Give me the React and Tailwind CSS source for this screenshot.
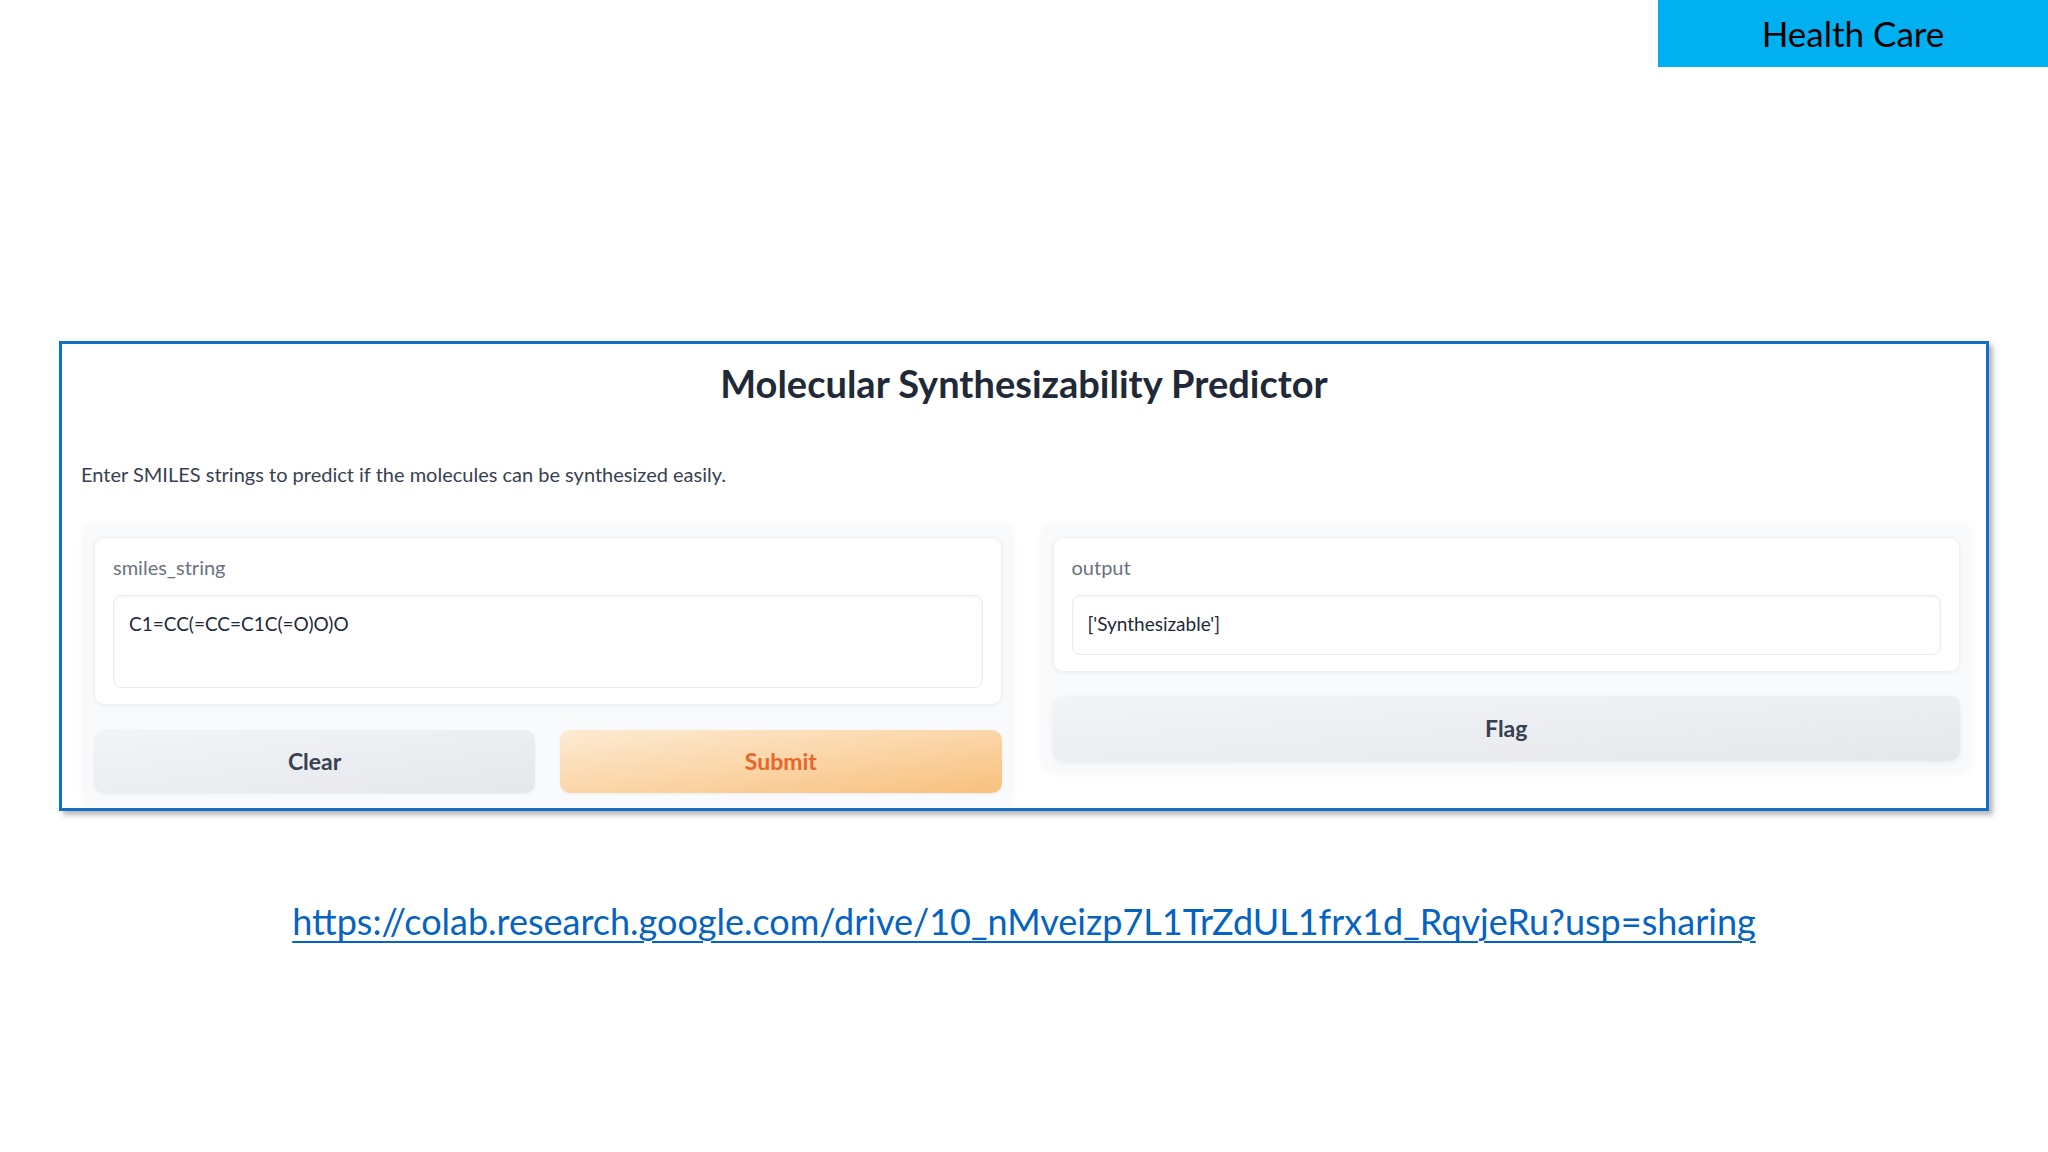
import React from 'react';

const uiFont = { fontFamily: 'Lato, "Noto Sans", sans-serif' };

const Panel = ({ label, value, tall }) => (
  <div className="bg-white rounded-[10px] border border-[#eef0f2] shadow-[0_1px_4px_rgba(0,0,0,0.05)] px-[18px] pt-[15px] pb-[16px]">
    <div className="text-[20px] leading-[28px] text-[#6b7280]">{label}</div>
    <div
      className={`mt-[14px] rounded-[8px] border border-[#e9ebee] shadow-[inset_0_1px_3px_rgba(0,0,0,0.05)] bg-white px-[15px] pt-[14px] text-[19px] leading-[28px] text-[#1f2937] ${
        tall ? 'h-[93px]' : 'h-[60px]'
      }`}
    >
      {value}
    </div>
  </div>
);

const App = () => {
  return (
    <div className="w-[2048px] h-[1152px] bg-white flex flex-col relative overflow-hidden" style={uiFont}>
      {/* Top banner */}
      <div className="flex justify-end">
        <div
          className="w-[390px] h-[67px] bg-[#00b0f0] flex items-center justify-center text-[35px] text-black"
          style={{ fontFamily: 'Lato, "Open Sans", sans-serif' }}
        >
          Health Care
        </div>
      </div>

      {/* App screenshot frame */}
      <div className="ml-[59px] mt-[274px] w-[1930px] h-[470px] border-[3px] border-[#1170c4] bg-white shadow-[4px_4px_5px_rgba(0,0,0,0.28)] flex flex-col overflow-hidden">
        <h1 className="pt-[17px] text-center text-[38px] leading-[44px] font-bold text-[#1f2937]">
          Molecular Synthesizability Predictor
        </h1>
        <p className="mt-[55px] pl-[19px] text-[20px] leading-[28px] text-[#374151]">
          Enter SMILES strings to predict if the molecules can be synthesized easily.
        </p>

        <div className="mt-[36px] pl-[21px] pr-[15px] grid grid-cols-2 gap-[29px] items-start">
          {/* Left column */}
          <div className="flex flex-col gap-[25px] bg-[#f9fafb] rounded-[12px] shadow-[0_0_8px_rgba(0,0,0,0.04)] px-[11px] pt-[13px] pb-[14px]">
            <Panel label="smiles_string" value="C1=CC(=CC=C1C(=O)O)O" tall />
            <div className="grid grid-cols-2 gap-[25px]">
              <button className="h-[63px] rounded-[10px] bg-gradient-to-br from-[#f3f4f6] to-[#e5e7eb] text-[23px] font-bold text-[#374151] shadow-[0_1px_3px_rgba(0,0,0,0.06)]">
                Clear
              </button>
              <button className="h-[63px] rounded-[10px] bg-gradient-to-br from-[#fdebd3] to-[#f8c07c] text-[23px] font-bold text-[#e8662a] shadow-[0_1px_3px_rgba(0,0,0,0.06)]">
                Submit
              </button>
            </div>
          </div>

          {/* Right column */}
          <div className="flex flex-col gap-[24px] bg-[#f9fafb] rounded-[12px] shadow-[0_0_8px_rgba(0,0,0,0.04)] px-[11px] pt-[13px] pb-[12px]">
            <Panel label="output" value="['Synthesizable']" />
            <button className="h-[65px] rounded-[10px] bg-gradient-to-br from-[#f3f4f6] to-[#e5e7eb] text-[23px] font-bold text-[#374151] shadow-[0_2px_6px_rgba(0,0,0,0.06)]">
              Flag
            </button>
          </div>
        </div>
      </div>

      {/* Link */}
      <div className="mt-[86px] text-center leading-[48px]">
        <a
          href="#"
          className="text-[36px] text-[#0563c1] underline decoration-[2px] underline-offset-[6px]"
          style={{ fontFamily: 'Lato, "Open Sans", sans-serif' }}
        >
          https://colab.research.google.com/drive/10_nMveizp7L1TrZdUL1frx1d_RqvjeRu?usp=sharing
        </a>
      </div>
    </div>
  );
};

export default App;
